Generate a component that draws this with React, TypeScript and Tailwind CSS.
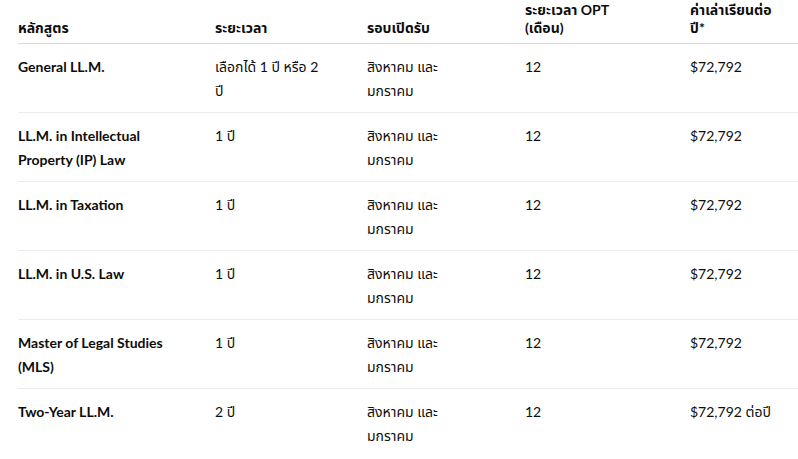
import React from "react";

type Cell = string[];
const when: Cell = ["สิงหาคม และ", "มกราคม"];
const rows: Cell[][] = [
  [["General LL.M."], ["เลือกได้ 1 ปี หรือ 2", "ปี"], when, ["12"], ["$72,792"]],
  [["LL.M. in Intellectual", "Property (IP) Law"], ["1 ปี"], when, ["12"], ["$72,792"]],
  [["LL.M. in Taxation"], ["1 ปี"], when, ["12"], ["$72,792"]],
  [["LL.M. in U.S. Law"], ["1 ปี"], when, ["12"], ["$72,792"]],
  [["Master of Legal Studies", "(MLS)"], ["1 ปี"], when, ["12"], ["$72,792"]],
  [["Two-Year LL.M."], ["2 ปี"], when, ["12"], ["$72,792 ต่อปี"]],
];

const headers: Cell[] = [["หลักสูตร"], ["ระยะเวลา"], ["รอบเปิดรับ"], ["ระยะเวลา OPT", "(เดือน)"], ["ค่าเล่าเรียนต่อ", "ปี*"]];

const grid = "grid grid-cols-[197px_152px_158px_165px_1fr]";

function Lines({ lines }: { lines: Cell }) {
  return (
    <>
      {lines.map((l, i) => (
        <div key={i} className="whitespace-nowrap">
          {l}
        </div>
      ))}
    </>
  );
}

export default function App() {
  return (
    <div
      className="w-[798px] h-[459px] overflow-hidden bg-white pl-[18px] text-[14px] text-[#0d0d0d]"
      style={{ fontFamily: 'Lato, "Noto Sans", "Noto Sans Thai", Tahoma, sans-serif' }}
    >
      <div className={`${grid} items-end border-b border-[#d9d9d9] pt-px pb-[6px]`}>
        {headers.map((h, i) => (
          <div key={i} className="pr-4 font-bold leading-[18px]">
            <Lines lines={h} />
          </div>
        ))}
      </div>
      {rows.map((r, ri) => (
        <div
          key={ri}
          className={`${grid} pt-[11px] pb-[9px] ${ri < rows.length - 1 ? "border-b border-[#ececec]" : ""}`}
        >
          {r.map((c, ci) => (
            <div key={ci} className={`pr-4 leading-6 min-h-12 ${ci === 0 ? "font-bold" : ""}`}>
              <Lines lines={c} />
            </div>
          ))}
        </div>
      ))}
    </div>
  );
}
